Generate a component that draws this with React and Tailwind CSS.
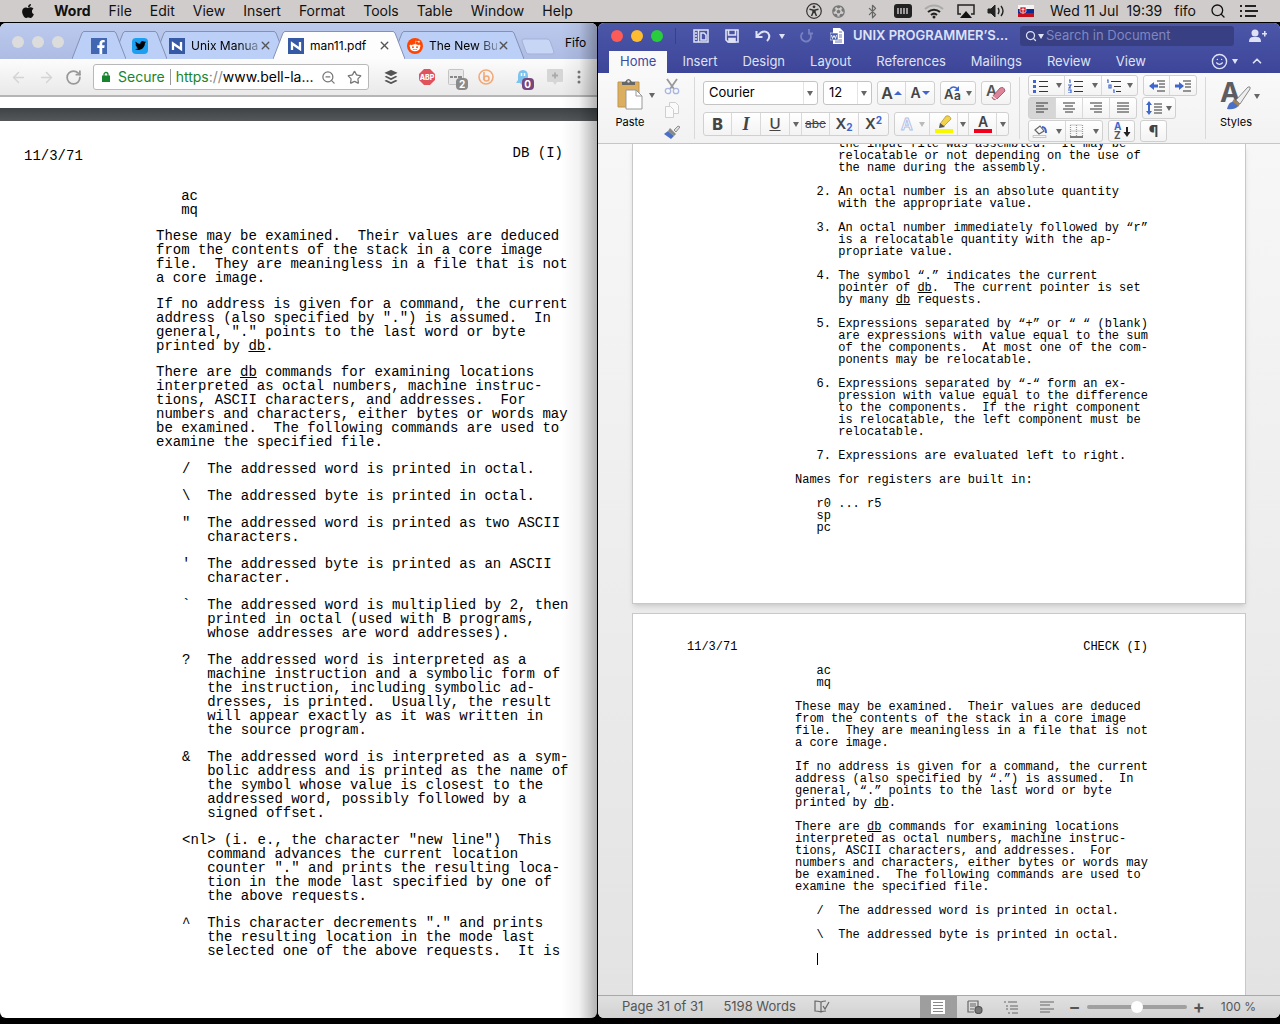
import React, { useState } from 'react';
import { FaApple, FaBuffer, FaFacebookF, FaFutbol, FaRedditAlien, FaTwitter } from 'react-icons/fa';
import {
  ArrowLeft,
  ArrowRight,
  Bluetooth,
  ChevronUp,
  RotateCw,
  Search,
  Smile,
  Star,
  X,
  ZoomOut,
} from 'lucide-react';

const MENUS = ['File', 'Edit', 'View', 'Insert', 'Format', 'Tools', 'Table', 'Window', 'Help'];

const RIBBON_TABS = ['Insert', 'Design', 'Layout', 'References', 'Mailings', 'Review', 'View'];

const PDF_PROSE = [
  `   ac
   mq`,
  `These may be examined.  Their values are deduced
from the contents of the stack in a core image
file.  They are meaningless in a file that is not
a core image.`,
  `If no address is given for a command, the current
address (also specified by ".") is assumed.  In
general, "." points to the last word or byte
printed by _db_.`,
  `There are _db_ commands for examining locations
interpreted as octal numbers, machine instruc-
tions, ASCII characters, and addresses.  For
numbers and characters, either bytes or words may
be examined.  The following commands are used to
examine the specified file.`,
];

const PDF_REQUESTS = [
  `/  The addressed word is printed in octal.`,
  `\\  The addressed byte is printed in octal.`,
  `"  The addressed word is printed as two ASCII
   characters.`,
  `'  The addressed byte is printed as an ASCII
   character.`,
  `\`  The addressed word is multiplied by 2, then
   printed in octal (used with B programs,
   whose addresses are word addresses).`,
  `?  The addressed word is interpreted as a
   machine instruction and a symbolic form of
   the instruction, including symbolic ad-
   dresses, is printed.  Usually, the result
   will appear exactly as it was written in
   the source program.`,
  `&  The addressed word is interpreted as a sym-
   bolic address and is printed as the name of
   the symbol whose value is closest to the
   addressed word, possibly followed by a
   signed offset.`,
  `<nl> (i. e., the character "new line")  This
   command advances the current location
   counter "." and prints the resulting loca-
   tion in the mode last specified by one of
   the above requests.`,
  `^  This character decrements "." and prints
   the resulting location in the mode last
   selected one of the above requests.  It is`,
];

const WORD_PAGE_30 = [
  `      the input file was assembled.  It may be
      relocatable or not depending on the use of
      the name during the assembly.`,
  `   2. An octal number is an absolute quantity
      with the appropriate value.`,
  `   3. An octal number immediately followed by “r”
      is a relocatable quantity with the ap-
      propriate value.`,
  `   4. The symbol “.” indicates the current
      pointer of _db_.  The current pointer is set
      by many _db_ requests.`,
  `   5. Expressions separated by “+” or “ “ (blank)
      are expressions with value equal to the sum
      of the components.  At most one of the com-
      ponents may be relocatable.`,
  `   6. Expressions separated by “-“ form an ex-
      pression with value equal to the difference
      to the components.  If the right component
      is relocatable, the left component must be
      relocatable.`,
  `   7. Expressions are evaluated left to right.`,
  `Names for registers are built in:`,
  `   r0 ... r5
   sp
   pc`,
];

const WORD_PAGE_31 = [
  `   ac
   mq`,
  `These may be examined.  Their values are deduced
from the contents of the stack in a core image
file.  They are meaningless in a file that is not
a core image.`,
  `If no address is given for a command, the current
address (also specified by “.”) is assumed.  In
general, “.” points to the last word or byte
printed by _db_.`,
  `There are _db_ commands for examining locations
interpreted as octal numbers, machine instruc-
tions, ASCII characters, and addresses.  For
numbers and characters, either bytes or words may
be examined.  The following commands are used to
examine the specified file.`,
  `   /  The addressed word is printed in octal.`,
  `   \\  The addressed byte is printed in octal.`,
];

// _word_ marks an underlined word
const Typed = ({ text }) => (
  <p className="whitespace-pre">
    {text.split('_').map((part, i) => (i % 2 ? <u key={i}>{part}</u> : part))}
  </p>
);

const Caret = ({ className = 'text-[#666]' }) => (
  <svg viewBox="0 0 6 5" className={`h-[5px] w-[6px] shrink-0 fill-current ${className}`}>
    <path d="M0 0h6L3 5z" />
  </svg>
);

const MenuBar = () => (
  <header className="flex h-[22px] shrink-0 items-center bg-[#d0cccb] pl-5 pr-[22px] text-sm text-[#111]">
    <FaApple className="mr-[18px] h-4 w-4" />
    <nav className="flex items-center gap-[18px]">
      <button className="font-bold">Word</button>
      {MENUS.map(menu => (
        <button key={menu}>{menu}</button>
      ))}
    </nav>
    <div className="ml-auto flex items-center">
      <svg viewBox="0 0 16 16" className="mr-[10px] h-4 w-4" fill="none" stroke="#333">
        <circle cx="8" cy="8" r="7.300" strokeWidth="1.200" />
        <circle cx="8" cy="3.800" r="1.400" fill="#333" stroke="none" />
        <path d="M3.500 6.300l3.500.7v2.500L5.500 13M12.500 6.300L9 7v2.500l1.500 3.500M8 6.500v3.500" strokeWidth="1.500" />
      </svg>
      <FaFutbol className="mr-[20px] h-[13px] w-[13px] text-[#777]" />
      <Bluetooth className="mr-[14px] h-[15px] w-[15px] text-[#666]" strokeWidth={2} />
      <svg viewBox="0 0 18 14" className="mr-[12px] h-[14px] w-[18px]">
        <rect width="18" height="14" rx="3" fill="#222" />
        <path d="M4 4v6M7 4v6M10 4v6M13 4v6" stroke="#d0cccb" strokeWidth="1.4" />
      </svg>
      <svg viewBox="0 0 20 15" className="mr-[13px] h-[15px] w-[20px]" fill="none" strokeWidth="2">
        <path d="M1 5a13 13 0 0 1 18 0" stroke="#aaa" />
        <path d="M4 8a9 9 0 0 1 12 0M7 11a4.500 4.500 0 0 1 6 0" stroke="#222" />
        <circle cx="10" cy="13" r="1.500" fill="#222" />
      </svg>
      <svg viewBox="0 0 18 14" className="mr-[12px] h-[14px] w-[18px]">
        <path d="M4 10H1V1h16v9h-3" fill="none" stroke="#222" strokeWidth="1.500" />
        <path d="M9 7l6 7H3z" fill="#111" />
      </svg>
      <svg viewBox="0 0 18 14" className="mr-[13px] h-[14px] w-[18px]" fill="none" stroke="#222">
        <path d="M1 5h3l4-4v12L4 9H1z" fill="#222" />
        <path d="M11 4q2 3 0 6M14 2q4 5 0 10" strokeWidth="1.400" />
      </svg>
      <svg viewBox="0 0 16 12" className="mr-[16px] h-3 w-4">
        <path d="M0 0h16v4H0z" fill="#f4f4f4" />
        <path d="M0 4h16v4H0z" fill="#102a94" />
        <path d="M0 8h16v4H0z" fill="#c4101c" />
        <path d="M2 2h6v5q-3 3-6 0z" fill="#d8202c" stroke="#fff" strokeWidth=".6" />
        <path d="M5 3v5M3.500 4.500h3" stroke="#fff" strokeWidth=".8" />
      </svg>
      <span className="whitespace-pre">Wed 11 Jul  19:39</span>
      <span className="ml-[12px]">fifo</span>
      <Search className="ml-[14px] h-4 w-4" strokeWidth={2} />
      <svg viewBox="0 0 18 12" className="ml-[14px] h-3 w-[18px]" stroke="#222" strokeWidth="2">
        <path d="M0 1h2M5 1h11M0 6h2M5 6h13M0 11h2M5 11h11" />
      </svg>
    </div>
  </header>
);

const NokiaIcon = () => (
  <svg viewBox="0 0 16 16" className="h-4 w-4 shrink-0">
    <rect width="16" height="16" fill="#3559a5" />
    <path d="M4 12V5.500l8 5.500V4" fill="none" stroke="#fff" strokeWidth="2.300" />
  </svg>
);

const Tab = ({ active = false, wide = false, className = '', label, children }) => {
  const fill = active ? '#fdfdfd' : '#bccff6';
  return (
    <div className={`relative -ml-[13px] flex h-7 ${className}`}>
      <svg viewBox="0 0 12 28" className="h-7 w-3">
        <path d="M0 28L10 2q1-1.500 2-1.500V28z" fill={fill} />
        <path d="M0 28L10 2q1-1.500 2-1.500" fill="none" stroke="#8391b5" />
      </svg>
      <div
        className={`flex items-center border-t border-[#8391b5] ${
          active ? 'bg-[#fdfdfd]' : 'bg-[#bccff6]'
        } ${wide ? 'w-[108px] pl-[3px]' : 'w-[30px] justify-center'}`}
      >
        {children}
        {wide && (
          <>
            <button
              className={`ml-[6px] w-[68px] whitespace-nowrap text-left text-xs text-black ${
                active ? '' : '[mask-image:linear-gradient(to_right,#000_70%,#0004)]'
              }`}
            >
              {label}
            </button>
            <button aria-label="Close tab">
              <X className="h-[13px] w-[13px] text-[#555]" strokeWidth={2.5} />
            </button>
          </>
        )}
      </div>
      <svg viewBox="0 0 12 28" className="h-7 w-3">
        <path d="M12 28L2 2Q1 .5 0 .5V28z" fill={fill} />
        <path d="M12 28L2 2Q1 .5 0 .5" fill="none" stroke="#8391b5" />
      </svg>
    </div>
  );
};

const Extensions = () => (
  <div className="ml-[14px] flex flex-1 items-center justify-between pr-4">
    <FaBuffer className="mr-[6px] h-4 w-4 text-[#555]" />
    <svg viewBox="0 0 16 16" className="h-4 w-4">
      <path d="M5 0h6l5 5v6l-5 5H5l-5-5V5z" fill="#e0525c" />
      <text x="8" y="11" textAnchor="middle" fontSize="7" fontWeight="800" fill="#fff">ABP</text>
    </svg>
    <div className="relative">
      <svg viewBox="0 0 16 16" className="h-4 w-4">
        <rect x=".5" y=".5" width="15" height="15" rx="1" fill="#e9e9e9" stroke="#c4c4c4" />
        <path d="M2 8h3M6 8h3M10 8h4" stroke="#888" strokeWidth="2" />
      </svg>
      <span className="absolute -bottom-[5px] left-2 w-3 rounded-sm bg-[#8a8a8a] text-center text-[10px] font-bold leading-3 text-white">2</span>
    </div>
    <svg viewBox="0 0 16 16" className="h-4 w-4" fill="none" stroke="#f4a877" strokeWidth="1.600">
      <circle cx="8" cy="8" r="7" />
      <path d="M6 3v8" />
      <circle cx="8.500" cy="9.500" r="2.500" />
    </svg>
    <div className="relative ml-2">
      <svg viewBox="0 0 14 16" className="h-4 w-[14px]">
        <path d="M2 7q0-6 5-6t5 6v5l2 2h-3l-1 2-2-2-2 2-2-2H0l2-3z" fill="#7cc4ee" />
        <path d="M5.500 4v3M8.500 4v3" stroke="#fff" strokeWidth="1.500" />
      </svg>
      <span className="absolute -bottom-[5px] left-[6px] w-3 rounded-sm bg-[#75477d] text-center text-[10px] font-bold leading-3 text-white">0</span>
    </div>
    <svg viewBox="0 0 16 16" className="ml-1 h-4 w-4">
      <path d="M1 0h14q1 0 1 1v11q0 1-1 1h-5l-2 3-2-3H1q-1 0-1-1V1q0-1 1-1z" fill="#d6d6d6" />
      <path d="M8 3.500v6M5 6.500h6" stroke="#aaa" strokeWidth="1.800" />
    </svg>
    <svg viewBox="0 0 4 14" className="h-[14px] w-1 fill-[#777]">
      <circle cx="2" cy="2" r="1.500" />
      <circle cx="2" cy="7" r="1.500" />
      <circle cx="2" cy="12" r="1.500" />
    </svg>
  </div>
);

const ChromeWindow = () => (
  <section className="relative flex min-w-0 flex-col overflow-hidden rounded-md bg-white">
    <div className="flex h-9 shrink-0 items-end bg-gradient-to-b from-[#bccaee] to-[#aebbe3]">
      <div className="mb-[11px] ml-3 flex gap-2">
        <span className="h-3 w-3 rounded-full bg-[#dcdcdc]" />
        <span className="h-3 w-3 rounded-full bg-[#dcdcdc]" />
        <span className="h-3 w-3 rounded-full bg-[#dcdcdc]" />
      </div>
      <div className="ml-[21px] flex">
        <Tab className="z-[3]">
          <span className="flex h-4 w-4 items-end justify-end bg-[#4267b2]">
            <FaFacebookF className="h-[14px] w-3 text-white" />
          </span>
        </Tab>
        <Tab className="z-[2]">
          <span className="flex h-4 w-4 items-center justify-center rounded-sm bg-[#1c9ff0]">
            <FaTwitter className="h-[11px] w-[11px] text-black" />
          </span>
        </Tab>
        <Tab wide className="z-[1]" label="Unix Manua"><NokiaIcon /></Tab>
        <Tab wide active className="z-[5]" label="man11.pdf"><NokiaIcon /></Tab>
        <Tab wide label="The New Bu">
          <span className="flex h-4 w-4 shrink-0 items-center justify-center rounded-full bg-[#ff4500]">
            <FaRedditAlien className="h-3 w-3 text-white" />
          </span>
        </Tab>
      </div>
      <button aria-label="New tab" className="mb-1 -ml-[3px]">
        <svg viewBox="0 0 34 17" className="h-[17px] w-[34px]">
          <path d="M3 1h23q2 0 3 2l4 11q0 2-2 2H8q-2 0-3-2L1 3q0-2 2-2z" fill="#c8d6f5" stroke="#a3b1d8" />
        </svg>
      </button>
      <span className="mb-2 ml-[10px] text-xs text-black">Fifo</span>
    </div>

    <div className="flex h-[38px] shrink-0 items-center border-b-2 border-[#b5b5b5] bg-gradient-to-b from-[#fcfcfc] to-[#e9e9e9] pl-[10px]">
      <button aria-label="Back"><ArrowLeft className="h-[17px] w-[17px] text-[#d4d4d4]" /></button>
      <button aria-label="Forward" className="ml-[11px]"><ArrowRight className="h-[17px] w-[17px] text-[#d4d4d4]" /></button>
      <button aria-label="Reload" className="ml-[10px]"><RotateCw className="h-[17px] w-[17px] text-[#999]" strokeWidth={2.5} /></button>
      <div className="ml-[11px] flex h-[26px] w-[47%] items-center rounded-[3px] border border-[#b8b8b8] bg-white pl-2 pr-[6px] text-sm">
        <svg viewBox="0 0 8 12" className="h-3 w-2">
          <path d="M2 5V3.500a2 2 0 0 1 4 0V5" fill="none" stroke="#17852f" strokeWidth="1.300" />
          <path d="M0 4.500h8V11H0z" fill="#17852f" />
        </svg>
        <span className="ml-2 text-[#17852f]">Secure</span>
        <span className="mx-[5px] h-4 w-px bg-[#999]" />
        <a href="https://www.bell-labs.com" className="whitespace-nowrap text-black">
          <span className="text-[#17852f]">https</span>
          <span className="text-[#888]">://</span>www.bell-la...
        </a>
        <button aria-label="Zoom" className="ml-auto"><ZoomOut className="h-[15px] w-[15px] text-[#777]" /></button>
        <button aria-label="Bookmark" className="ml-[11px]"><Star className="h-[15px] w-[15px] text-[#777]" /></button>
      </div>
      <Extensions />
    </div>

    <div className="mt-[11px] h-[13px] shrink-0 bg-gradient-to-b from-[#3f4345] to-[#54585a]" />

    <div className="min-h-0 flex-1 overflow-hidden pl-6 pr-[34px] pt-[25px] font-['Liberation_Mono',monospace] text-sm leading-[14px] text-black">
      <div className="flex items-end justify-between whitespace-pre">
        <span className="pt-[3px]">11/3/71</span>
        <span className="self-start">DB (I)</span>
      </div>
      <article className="ml-[132px] mt-[26px]">
        <div className="flex flex-col gap-3">
          {PDF_PROSE.map(text => (
            <Typed key={text} text={text} />
          ))}
        </div>
        <div className="ml-[26px] mt-[13px] flex flex-col gap-[13px]">
          {PDF_REQUESTS.map(text => (
            <Typed key={text} text={text} />
          ))}
        </div>
      </article>
    </div>
    {/* shadow cast by the window in front */}
    <div className="pointer-events-none absolute inset-y-0 right-0 w-9 bg-gradient-to-r from-transparent via-black/5 to-black/30" />
  </section>
);

const TitleBar = () => (
  <div className="flex h-[26px] items-center pl-[13px] pr-[13px] text-[#dfe2f5]">
    <div className="flex gap-2">
      <button aria-label="Close" className="h-3 w-3 rounded-full bg-[#fc5b57]" />
      <button aria-label="Minimise" className="h-3 w-3 rounded-full bg-[#fdbc31]" />
      <button aria-label="Zoom window" className="h-3 w-3 rounded-full bg-[#29cc3d]" />
    </div>
    <span className="ml-3 h-4 w-px bg-[#38408c]" />
    <button aria-label="Sidebar" className="ml-[17px]">
      <svg viewBox="0 0 16 14" className="h-[14px] w-4" fill="none" stroke="currentColor" strokeWidth="1.500">
        <path d="M1 1h14v12H1zM5.500 1v12M8 4v7h5V6l-2-2z" />
        <path d="M2 4h2M2 7h2M2 10h2" />
      </svg>
    </button>
    <button aria-label="Save" className="ml-4">
      <svg viewBox="0 0 14 14" className="h-[14px] w-[14px]" fill="none" stroke="currentColor" strokeWidth="1.600">
        <path d="M1 1h12v12H3l-2-2zM3.500 1v5h7V1" />
        <path d="M4 9.500h6V13H4z" fill="currentColor" />
      </svg>
    </button>
    <button aria-label="Undo" className="ml-4">
      <svg viewBox="0 0 16 14" className="h-[14px] w-4" fill="none" stroke="currentColor" strokeWidth="2">
        <path d="M2 7l4-3.500q4-2 7 .5 3 4-1 8M1.500 2v6h6" />
      </svg>
    </button>
    <Caret className="ml-2 text-[#dfe2f5]" />
    <button aria-label="Redo" className="ml-[14px]">
      <svg viewBox="0 0 14 14" className="h-[14px] w-[14px] text-[#7880c0]" fill="none" stroke="currentColor" strokeWidth="1.800">
        <path d="M4 3.500a5 5 0 1 0 6.500.5M10 0v4.500h4" />
      </svg>
    </button>
    <svg viewBox="0 0 14 16" className="ml-[17px] h-4 w-[14px] shrink-0">
      <path d="M3 0h7l4 4v12H3z" fill="#fff" />
      <path d="M9 4h3M9 7h3M9 9h3M5 12h7M5 14h7" stroke="#6c76b5" />
      <rect y="5" width="8" height="7" fill="#4a5dab" stroke="#fff" strokeWidth=".6" />
      <path d="M1.500 7l1 3.500L4 7.500l1.500 3 1-3.500" fill="none" stroke="#fff" strokeWidth=".9" />
    </svg>
    <h1 className="ml-[9px] whitespace-nowrap text-[13px] font-semibold">UNIX PROGRAMMER’S…</h1>
    <label className="ml-auto flex h-5 w-[214px] min-w-0 items-center rounded-[3px] bg-[#383f82] pl-[5px]">
      <Search className="h-3 w-3" strokeWidth={2.5} />
      <Caret className="ml-px text-[#dfe2f5]" />
      <input
        aria-label="Search in Document"
        placeholder="Search in Document"
        className="ml-[2px] min-w-0 flex-1 bg-transparent text-[13px] outline-none placeholder:text-[#8087c0]"
      />
    </label>
    <button aria-label="Share" className="ml-[15px]">
      <svg viewBox="0 0 18 14" className="h-[14px] w-[18px] fill-current">
        <circle cx="6" cy="4" r="3.500" />
        <path d="M0 13q0-5 4-5h4q4 0 4 5zM13 4h2V2h1.500v2h2v1.500h-2v2H15v-2h-2z" />
      </svg>
    </button>
  </div>
);

const RibbonTabs = () => (
  <nav className="flex h-6 items-end pl-[11px] pr-4 text-[13px] text-[#dfe2f5]">
    <button className="h-[22px] bg-[#f9f9f9] px-[11px] text-[#3d4a9e]">Home</button>
    <div className="ml-[15px] flex h-[22px] items-center gap-[25px]">
      {RIBBON_TABS.map(tab => (
        <button key={tab}>{tab}</button>
      ))}
    </div>
    <div className="ml-auto flex h-6 items-center gap-1">
      <Smile className="h-[17px] w-[17px]" />
      <Caret className="text-[#dfe2f5]" />
      <ChevronUp className="ml-2 h-[14px] w-[14px]" strokeWidth={3} />
    </div>
  </nav>
);

const Group = ({ className = '', children }) => (
  <div className={`flex items-stretch divide-x divide-[#d9d9d9] rounded-[3px] border border-[#d0d0d0] bg-gradient-to-b from-white to-[#f3f3f3] ${className}`}>
    {children}
  </div>
);

const Tool = ({ label, className = '', children }) => (
  <button aria-label={label} className={`flex items-center justify-center ${className}`}>
    {children}
  </button>
);

const Picker = ({ label, value, className }) => (
  <div className={`relative flex h-6 items-center rounded-[3px] border border-[#c4c4c4] bg-white ${className}`}>
    <select aria-label={label} className="w-full appearance-none bg-transparent pl-[5px] text-[13px] text-black outline-none">
      <option>{value}</option>
    </select>
    <span className="absolute right-[13px] h-full w-px bg-[#e4e4e4]" />
    <Caret className="absolute right-1 text-[#666]" />
  </div>
);

const Lines = ({ d, className = 'text-[#333]', children }) => (
  <svg viewBox="0 0 16 14" className={`h-[14px] w-4 ${className}`} fill="none" stroke="currentColor" strokeWidth="1.200">
    <path d={d} />
    {children}
  </svg>
);

const ClipboardTools = () => (
  <div className="flex">
    <div className="flex w-8 flex-col items-center">
      <svg viewBox="0 0 26 32" className="h-8 w-[26px]">
        <path d="M1 4h21v25H1z" fill="#dcae60" stroke="#c2954a" />
        <path d="M5 7V4h3q3.500-6 7 0h3v3z" fill="#666" />
        <circle cx="11.500" cy="3.500" r="1.200" fill="#ddd" />
        <path d="M9 12h10l6 6v13H9z" fill="#fff" stroke="#999" />
        <path d="M19 12v6h6" fill="none" stroke="#999" />
      </svg>
      <button className="mt-1 text-[11px] leading-4 text-black">Paste</button>
    </div>
    <Caret className="ml-[3px] mt-[15px] text-[#666]" />
    <div className="ml-[9px] flex flex-col items-center gap-[7px]">
      <Tool label="Cut">
        <svg viewBox="0 0 16 17" className="h-[17px] w-4" fill="none">
          <path d="M3 1l7 10M13 1L6 11" stroke="#999" strokeWidth="1.800" />
          <circle cx="4" cy="13" r="2.700" stroke="#a9b6e2" strokeWidth="1.300" />
          <circle cx="12" cy="13" r="2.700" stroke="#a9b6e2" strokeWidth="1.300" />
        </svg>
      </Tool>
      <Tool label="Copy">
        <svg viewBox="0 0 14 16" className="h-4 w-[14px]" fill="#fafafa" stroke="#cfcfcf">
          <path d="M4.500.5h6l3 3v8h-9z" />
          <path d="M.5 4.500h5l3 3v8h-8z" />
        </svg>
      </Tool>
      <Tool label="Format Painter">
        <svg viewBox="0 0 16 14" className="h-[14px] w-4">
          <path d="M10 5l4-4 2 1-4 5z" fill="#ddd" stroke="#777" strokeWidth=".8" />
          <path d="M6 3l6 6-2 2-6-5z" fill="#888" />
          <path d="M4 6l6 5-3 3-7-5z" fill="#4a6fc4" />
        </svg>
      </Tool>
    </div>
  </div>
);

const FontTools = () => (
  <div className="flex flex-col gap-[7px] pt-[5px] text-[#444]">
    <div className="flex gap-[5px]">
      <Picker label="Font" value="Courier" className="w-[115px]" />
      <Picker label="Font size" value="12" className="w-[49px]" />
      <Group className="h-6">
        <Tool label="Grow font" className="w-[28px] text-base font-semibold">
          A
          <svg viewBox="0 0 8 4" className="ml-px h-1 w-2"><path d="M0 4h8L4 0z" fill="#3f66cf" /></svg>
        </Tool>
        <Tool label="Shrink font" className="w-[28px] text-sm font-semibold">
          A
          <svg viewBox="0 0 8 4" className="ml-px h-1 w-2"><path d="M0 0h8L4 4z" fill="#3f66cf" /></svg>
        </Tool>
      </Group>
      <Group className="h-6">
        <Tool label="Change case" className="w-[34px] gap-1 text-sm font-medium">
          <svg viewBox="0 0 18 16" className="h-4 w-[18px]">
            <text x="0" y="14" fontSize="13" fontWeight="600" fill="#444">A</text>
            <text x="10" y="15" fontSize="12" fontWeight="600" fill="#444">a</text>
            <path d="M6 4q3-4 8 0" stroke="#3f66cf" strokeWidth="1.400" fill="none" />
            <path d="M15 1v5h-5z" fill="#3f66cf" />
          </svg>
          <Caret />
        </Tool>
      </Group>
      <Group className="h-6">
        <Tool label="Clear formatting" className="w-7">
          <svg viewBox="0 0 20 20" className="h-5 w-5">
            <text x="0" y="13" fontSize="15" fontWeight="600" fill="#555">A</text>
            <path d="M6 14l8-9q4-2 5 3l-8 8q-4 2-5-2z" fill="#dd8499" stroke="#9c4a60" strokeWidth=".8" />
            <path d="M6 13l5 4" stroke="#fff" />
          </svg>
        </Tool>
      </Group>
    </div>
    <div className="flex gap-[5px]">
      <Group className="h-6">
        <Tool label="Bold" className="w-7 text-base font-extrabold">B</Tool>
        <Tool label="Italic" className="w-[29px] font-['Liberation_Serif',serif] text-lg font-bold italic">I</Tool>
        <Tool label="Underline" className="w-[29px] text-[15px] font-medium"><u>U</u></Tool>
        <Tool label="Underline style" className="w-[12px]"><Caret /></Tool>
        <Tool label="Strikethrough" className="w-7 text-xs"><s>abc</s></Tool>
        <Tool label="Subscript" className="w-[29px] text-[15px] font-semibold">
          X<span className="self-end text-[10px] font-bold text-[#3f66cf]">2</span>
        </Tool>
        <Tool label="Superscript" className="w-[29px] text-[15px] font-semibold">
          X<span className="self-start text-[10px] font-bold text-[#3f66cf]">2</span>
        </Tool>
      </Group>
      <Group className="h-6">
        <Tool label="Text effects" className="w-[35px] gap-[5px]">
          <svg viewBox="0 0 14 16" className="h-4 w-[14px]">
            <text x="1" y="14" fontSize="16" fontWeight="600" fill="#fff" stroke="#b4c0e6">A</text>
          </svg>
          <Caret className="text-[#bbb]" />
        </Tool>
        <Tool label="Highlight" className="w-7">
          <svg viewBox="0 0 18 18" className="h-[18px] w-[18px]">
            <path d="M5 9l6-8q4-1 5 3l-7 7z" fill="#f1d44b" stroke="#a98f28" strokeWidth=".7" />
            <path d="M5 8l5 4-6 1z" fill="#555" />
            <path d="M0 14h18v4H0z" fill="#f8f800" />
          </svg>
        </Tool>
        <Tool label="Highlight colour" className="w-[11px]"><Caret /></Tool>
        <Tool label="Font colour" className="w-7">
          <svg viewBox="0 0 18 18" className="h-[18px] w-[18px]">
            <text x="9" y="12" textAnchor="middle" fontSize="14" fontWeight="600" fill="#444">A</text>
            <path d="M0 14h18v4H0z" fill="#f0001c" />
          </svg>
        </Tool>
        <Tool label="Font colour menu" className="w-[11px]"><Caret /></Tool>
      </Group>
    </div>
  </div>
);

const ParagraphTools = () => (
  <div className="flex flex-col gap-px">
    <div className="flex gap-[5px]">
      <Group className="h-[21px] w-[110px]">
        <Tool label="Bullets" className="flex-1 gap-[8px]">
          <Lines d="M7 2.500h9M7 7.500h9M7 12.500h9">
            <path d="M1 2.500h3M1 7.500h3M1 12.500h3" stroke="#3f66cf" strokeWidth="3" />
          </Lines>
          <Caret />
        </Tool>
        <Tool label="Numbering" className="flex-1 gap-[8px]">
          <Lines d="M6 2.500h9M6 7.500h9M6 12.500h9">
            <path d="M1 1h1v3M0 6h3L1 9h2M0 11h3v3H0" stroke="#3f66cf" />
          </Lines>
          <Caret />
        </Tool>
        <Tool label="Multilevel list" className="flex-1 gap-[5px]">
          <Lines d="M5 2.500h10M8 7.500h7M10 12.500h5">
            <path d="M1 1h1v3M3 6h2v3H3zM7 11h1v3" stroke="#3f66cf" />
          </Lines>
          <Caret />
        </Tool>
      </Group>
      <Group className="h-[21px]">
        <Tool label="Decrease indent" className="w-[26px]">
          <Lines d="M8 2h8M10 5h6M10 8h6M8 12h8">
            <path d="M0 7l5-4v2.500h4v3H5V11z" fill="#3f66cf" stroke="none" />
          </Lines>
        </Tool>
        <Tool label="Increase indent" className="w-[26px]">
          <Lines d="M8 2h8M10 5h6M10 8h6M8 12h8">
            <path d="M9 7L4 3v2.500H0v3h4V11z" fill="#3f66cf" stroke="none" />
          </Lines>
        </Tool>
      </Group>
    </div>
    <div className="flex gap-[5px]">
      <Group className="h-[22px]">
        <Tool label="Align left" className="w-[27px] bg-[#d6d6d6]"><Lines d="M2 2h12M2 5h8M2 8h12M2 11h8" /></Tool>
        <Tool label="Centre" className="w-[27px]"><Lines d="M2 2h12M4 5h8M2 8h12M4 11h8" /></Tool>
        <Tool label="Align right" className="w-[27px]"><Lines d="M2 2h12M6 5h8M2 8h12M6 11h8" /></Tool>
        <Tool label="Justify" className="w-[26px]"><Lines d="M2 2h12M2 5h12M2 8h12M2 11h12" /></Tool>
      </Group>
      <Group className="h-[22px]">
        <Tool label="Line spacing" className="w-8 gap-1">
          <Lines d="M8 3h8M8 6h8M8 9h8M8 12h8">
            <path d="M3 0l3 4H4v6h2l-3 4-3-4h2V4H0z" fill="#3f66cf" stroke="none" />
          </Lines>
          <Caret />
        </Tool>
      </Group>
    </div>
    <div className="flex gap-[5px]">
      <Group className="h-[22px]">
        <Tool label="Shading" className="w-[37px] gap-2">
          <Lines d="M3 6l5-4 4 5-5 3z" className="text-[#666]">
            <path d="M10 3q4 0 4 6" stroke="#3f66cf" strokeWidth="2" />
            <path d="M1 11.500h13v2H1z" stroke="#bbb" strokeWidth=".8" />
          </Lines>
          <Caret />
        </Tool>
        <Tool label="Borders" className="w-[36px] gap-2">
          <Lines d="M1 13h13" className="text-black">
            <path d="M1.500 1h12M1.500 7h12M1.500 1v11M7.500 1v11M13.500 1v11" stroke="#999" strokeDasharray="1 1" />
          </Lines>
          <Caret />
        </Tool>
      </Group>
      <Group className="h-[22px]">
        <Tool label="Sort" className="w-[25px]">
          <svg viewBox="0 0 18 18" className="h-[18px] w-[18px]">
            <text x="1" y="8" fontSize="10" fontWeight="700" fill="#3f66cf">A</text>
            <text x="1" y="17" fontSize="10" fontWeight="700" fill="#555">Z</text>
            <path d="M14 5v6" stroke="#222" strokeWidth="2" />
            <path d="M10.500 10h7L14 15z" fill="#222" />
          </svg>
        </Tool>
      </Group>
      <Group className="h-[22px]">
        <Tool label="Show marks" className="w-[25px] text-base font-bold text-[#444]">¶</Tool>
      </Group>
    </div>
  </div>
);

const Ribbon = () => (
  <div className="flex h-[71px] shrink-0 border-b border-[#c6c6c6] bg-gradient-to-b from-[#f9f9f9] to-[#f2f2f2] pl-4">
    <div className="pt-[5px]"><ClipboardTools /></div>
    <span className="ml-[14px] mr-2 mt-1 h-[62px] w-px shrink-0 bg-[#d9d9d9]" />
    <div className="pt-[3px]"><FontTools /></div>
    <span className="mx-2 mt-1 h-[62px] w-px shrink-0 bg-[#d9d9d9]" />
    <div className="pt-[2px]"><ParagraphTools /></div>
    <span className="mx-2 mt-1 h-[62px] w-px shrink-0 bg-[#d9d9d9]" />
    <div className="flex pl-1 pt-[7px]">
      <div className="flex w-9 flex-col items-center">
        <svg viewBox="0 0 32 30" className="h-[30px] w-8">
          <text x="0" y="22" fontSize="27" fontWeight="700" fill="#5c5c62">A</text>
          <path d="M16 20L28 7q3-1 2 2L20 24z" fill="#eee" stroke="#888" />
          <path d="M14 19l6 5-2 3-6-5z" fill="#a08258" />
          <path d="M7 29q2-8 6-7l5 4q-3 4-11 3z" fill="#4a6fc4" />
        </svg>
        <button className="mt-1 text-[11px] leading-4 text-black">Styles</button>
      </div>
      <Caret className="mt-[14px] text-[#666]" />
    </div>
  </div>
);

const StatusBar = () => {
  const [zoom, setZoom] = useState(100);

  return (
    <footer className="flex h-[23px] shrink-0 items-center border-t border-[#a8a8a8] bg-gradient-to-b from-[#e0e0e0] to-[#d2d2d2] pl-6 pr-6 text-[13px] text-[#555]">
      <span>Page 31 of 31</span>
      <span className="ml-5">5198 Words</span>
      <svg viewBox="0 0 16 14" className="ml-[18px] h-[14px] w-4" fill="none" stroke="#666" strokeWidth="1.200">
        <path d="M7 12V2q-3-1-6-1v10q3 0 6 1 2-1 5-1M7 2q2-1 5-1M9 6l2 3 4-7" />
      </svg>
      <div className="ml-auto flex h-full items-center">
        <Tool label="Print layout" className="h-full w-[37px] bg-[#9e9e9e]">
          <svg viewBox="0 0 14 14" className="h-[14px] w-[14px]">
            <path d="M0 0h14v14H0z" fill="#fff" />
            <path d="M2 2.500h10M2 5.500h10M2 8.500h10M2 11.500h10" stroke="#888" />
          </svg>
        </Tool>
        <Tool label="Web layout" className="w-9">
          <Lines d="M1 1h10v5M1 1v11h6M3 4h6M3 6h6M3 9h4" className="text-[#666]">
            <circle cx="11.500" cy="10" r="3.500" fill="#777" stroke="#555" />
          </Lines>
        </Tool>
        <Tool label="Outline" className="w-9">
          <Lines d="M1 2h2M5 2h9M3 6h2M7 6h8M3 9h2M7 9h8M5 13h2M9 13h6" className="text-[#666]" />
        </Tool>
        <Tool label="Draft" className="w-9"><Lines d="M1 2h14M1 5h10M1 9h14M1 12h10" className="text-[#666]" /></Tool>
        <button aria-label="Zoom out" className="ml-1 mr-[6px] text-lg font-semibold leading-4">−</button>
        <input
          type="range"
          aria-label="Zoom level"
          min="0"
          max="200"
          value={zoom}
          onChange={e => setZoom(Number(e.target.value))}
          className="h-1 w-[100px] appearance-none rounded-full bg-[#a0a0a0] [&::-webkit-slider-thumb]:h-3 [&::-webkit-slider-thumb]:w-3 [&::-webkit-slider-thumb]:appearance-none [&::-webkit-slider-thumb]:rounded-full [&::-webkit-slider-thumb]:bg-white"
        />
        <button aria-label="Zoom in" className="ml-[6px] mr-4 text-lg font-semibold leading-4">+</button>
        <span className="text-xs">{zoom} %</span>
      </div>
    </footer>
  );
};

const WordWindow = () => (
  <section className="flex min-w-0 flex-col overflow-hidden rounded-md bg-[#f2f2f2]">
    <div className="shrink-0 bg-gradient-to-b from-[#4c57a8] to-[#3d4599]">
      <TitleBar />
      <RibbonTabs />
    </div>
    <Ribbon />
    <div className="flex min-h-0 flex-1 flex-col gap-[9px] overflow-hidden bg-gradient-to-b from-[#f7f7f7] to-[#e3e3e3] px-[34px] font-['Liberation_Mono',monospace] text-xs leading-3 text-black">
      <div className="shrink-0 border border-t-0 border-[#c8c8c8] bg-white pb-[69px] pl-[162px] shadow-md">
        <article className="-mt-[6px] flex flex-col gap-3">
          {WORD_PAGE_30.map(text => (
            <Typed key={text} text={text} />
          ))}
        </article>
      </div>
      <div className="min-h-0 flex-1 border border-b-0 border-[#c8c8c8] bg-white pl-[54px] pr-[97px] pt-[27px]">
        <div className="flex justify-between whitespace-pre">
          <span>11/3/71</span>
          <span>CHECK (I)</span>
        </div>
        <article className="ml-[108px] mt-3 flex flex-col gap-3">
          {WORD_PAGE_31.map(text => (
            <Typed key={text} text={text} />
          ))}
          <span className="ml-[22px] h-3 w-px bg-black" />
        </article>
      </div>
    </div>
    <StatusBar />
  </section>
);

const App = () => (
  <div className="flex h-screen flex-col overflow-hidden bg-black font-[Inter,sans-serif]">
    <MenuBar />
    <main className="mb-[6px] mt-px grid min-h-0 flex-1 grid-cols-[597fr_682fr] grid-rows-[minmax(0,1fr)] gap-px">
      <ChromeWindow />
      <WordWindow />
    </main>
  </div>
);

export default App;
